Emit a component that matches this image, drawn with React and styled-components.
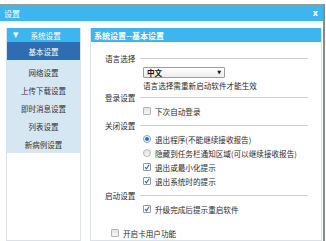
import React, { useState } from "react";
import styled, { createGlobalStyle } from "styled-components";

const GlobalStyle = createGlobalStyle`
  html, body {
    margin: 0;
    padding: 0;
    background: #fff;
    overflow: hidden;
  }
  body {
    font-family: "Noto Sans CJK SC", "DejaVu Sans", sans-serif;
    font-size: 8px;
    color: #2a2a2a;
  }
`;

const Window = styled.div`
  margin-top: 4px;
  width: 325px;
  height: 237px;
  box-sizing: border-box;
  border-top: 1px solid #9a9a9a;
  border-right: 2px solid #8a8a8a;
  display: flex;
  flex-direction: column;
`;

const TitleBar = styled.div`
  height: 16px;
  flex: none;
  background: #3db5ef;
  color: #fff;
  display: flex;
  align-items: center;
  justify-content: space-between;
  padding: 0 5px 0 4px;
  font-size: 8px;
`;

const Close = styled.span`
  font-family: "DejaVu Sans", sans-serif;
  font-weight: bold;
  font-size: 8px;
`;

const Body = styled.div`
  flex: 1;
  display: flex;
  gap: 9px;
  padding: 7px 1px 0 6px;
  min-height: 0;
`;

const Sidebar = styled.div`
  width: 75px;
  box-sizing: border-box;
  border: 1px solid #d7e2ec;
  border-top: none;
  display: flex;
  flex-direction: column;
`;

const SideHeader = styled.div`
  height: 14px;
  background: #3fb5ef;
  color: #fff;
  display: flex;
  align-items: center;
  gap: 12px;
  padding-left: 6px;
  font-size: 7.6px;
`;

const Arrow = styled.span`
  font-family: "DejaVu Sans", sans-serif;
  font-size: 7px;
`;

const NavList = styled.div`
  background: #d6e7f4;
`;

const NavItem = styled.div`
  height: 18px;
  display: flex;
  align-items: center;
  justify-content: center;
  font-size: 7.5px;
  cursor: pointer;
  background: ${(p) => (p.$active ? "#2f6cb2" : "transparent")};
  color: ${(p) => (p.$active ? "#fff" : "#333")};
  margin-bottom: ${(p) => (p.$active ? "3px" : "0")};
`;

const Panel = styled.div`
  flex: 1;
  box-sizing: border-box;
  border: 1px solid #d7e2ec;
  border-top: none;
  display: flex;
  flex-direction: column;
`;

const PanelHeader = styled.div`
  height: 15px;
  background: #3db5ef;
  color: #fff;
  display: flex;
  align-items: center;
  padding-left: 3px;
  font-size: 8px;
  font-weight: bold;
`;

const Content = styled.div`
  padding: 9px 13px 0 14px;
  display: flex;
  flex-direction: column;
  font-size: 7.6px;
`;

const Section = styled.div`
  display: flex;
  align-items: center;
  height: ${(p) => p.$h || 14}px;
  gap: 5px;
  &::after {
    content: "";
    flex: 1;
    height: 1px;
    background: #cfcfcf;
  }
`;

const Row = styled.label`
  display: flex;
  align-items: center;
  gap: 4px;
  height: ${(p) => p.$h || 14}px;
  padding-left: ${(p) => (p.$indent ? 38 : 6)}px;
  margin-top: ${(p) => p.$mt || 0}px;
`;

const Select = styled.div`
  width: 82px;
  height: 11px;
  box-sizing: border-box;
  border: 1px solid #9c9c9c;
  border-radius: 1px;
  background: linear-gradient(#fff, #eee);
  display: flex;
  align-items: center;
  justify-content: space-between;
  padding: 0 3px;
  font-weight: bold;
  color: #111;
`;

const SelArrow = styled.span`
  font-family: "DejaVu Sans", sans-serif;
  font-size: 5px;
`;

const Box = styled.span`
  width: 6px;
  height: 6px;
  flex: none;
  border: 1px solid ${(p) => (p.$checked ? "#8a9bb0" : "#b5b5b5")};
  background: ${(p) => (p.$checked ? "#fff" : "linear-gradient(#e4e4e4, #f4f4f4)")};
  border-radius: ${(p) => (p.$round ? "50%" : "1px")};
  display: flex;
  align-items: center;
  justify-content: center;
`;

const Dot = styled.span`
  width: 4px;
  height: 4px;
  border-radius: 50%;
  background: #2a6fc4;
`;

const Check = () => (
  <svg width="6" height="6" viewBox="0 0 6 6">
    <path d="M1 3.2 L2.4 4.8 L5.2 0.8" fill="none" stroke="#2b62b8" strokeWidth="1.1" />
  </svg>
);

const CheckRow = ({ checked, round, indent = true, mt, children }) => (
  <Row $indent={indent} $mt={mt}>
    <Box $checked={checked} $round={round}>
      {checked && (round ? <Dot /> : <Check />)}
    </Box>
    {children}
  </Row>
);

const nav = ["基本设置", "网络设置", "上传下载设置", "即时消息设置", "列表设置", "新病例设置"];

export default function App() {
  const [active, setActive] = useState(0);
  return (
    <>
      <GlobalStyle />
      <Window>
        <TitleBar>
          <span>设置</span>
          <Close>x</Close>
        </TitleBar>
        <Body>
          <Sidebar>
            <SideHeader>
              <Arrow>▼</Arrow>
              <span>系统设置</span>
            </SideHeader>
            <NavList>
              {nav.map((n, i) => (
                <NavItem key={n} $active={i === active} onClick={() => setActive(i)}>
                  {n}
                </NavItem>
              ))}
            </NavList>
          </Sidebar>
          <Panel>
            <PanelHeader>系统设置--基本设置</PanelHeader>
            <Content>
              <Section>语言选择</Section>
              <Row $indent>
                <Select>
                  <span>中文</span>
                  <SelArrow>▼</SelArrow>
                </Select>
              </Row>
              <Row $indent $h={12}>语言选择需重新启动软件才能生效</Row>
              <Section $h={13}>登录设置</Section>
              <CheckRow>下次自动登录</CheckRow>
              <Section>关闭设置</Section>
              <CheckRow round checked>退出程序(不能继续接收报告)</CheckRow>
              <CheckRow round>隐藏到任务栏通知区域(可以继续接收报告)</CheckRow>
              <CheckRow checked>退出或最小化提示</CheckRow>
              <CheckRow checked>退出系统时的提示</CheckRow>
              <Section>启动设置</Section>
              <CheckRow checked>升级完成后提示重启软件</CheckRow>
              <CheckRow indent={false} mt={10}>开启卡用户功能</CheckRow>
            </Content>
          </Panel>
        </Body>
      </Window>
    </>
  );
}
